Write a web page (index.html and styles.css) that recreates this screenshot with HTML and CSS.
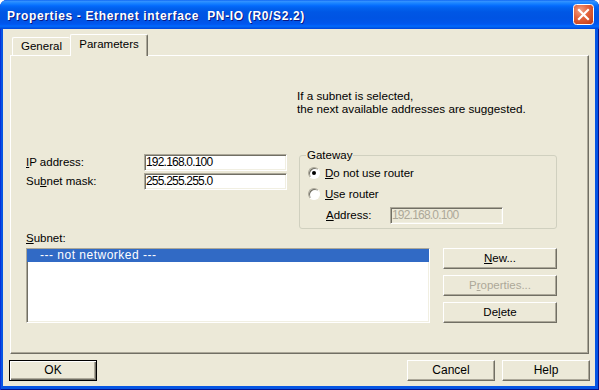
FILE: index.html
```html
<!DOCTYPE html>
<html>
<head>
<meta charset="utf-8">
<title>Properties - Ethernet interface PN-IO (R0/S2.2)</title>
<link rel="stylesheet" href="styles.css">
</head>
<body>
<div class="window">
  <div class="titlebar">
    <span class="title">Properties - Ethernet interface&nbsp; PN-IO (R0/S2.2)</span>
    <span class="close">
      <svg width="21" height="21" viewBox="0 0 21 21">
        <defs>
          <radialGradient id="cg" cx="0.35" cy="0.3" r="0.85">
            <stop offset="0" stop-color="#F2A184"/>
            <stop offset="0.45" stop-color="#E3643E"/>
            <stop offset="1" stop-color="#C33D17"/>
          </radialGradient>
        </defs>
        <rect x="0.5" y="0.5" width="20" height="20" rx="3" fill="url(#cg)" stroke="#fff"/>
        <path d="M6 6 L15 15 M15 6 L6 15" stroke="#fff" stroke-width="2.2" stroke-linecap="square"/>
      </svg>
    </span>
  </div>
  <div class="client">
    <div class="tabs">
      <div class="tab">General</div>
      <div class="tab active">Parameters</div>
    </div>
    <div class="panel">
      <p class="info">If a subnet is selected,<br>the next available addresses are suggested.</p>
      <div class="middle">
        <div class="addr">
          <span class="lbl"><u>I</u>P address:</span>
          <div class="field">192.168.0.100</div>
          <span class="lbl">Su<u>b</u>net mask:</span>
          <div class="field">255.255.255.0</div>
        </div>
        <fieldset class="gateway">
          <legend>Gateway</legend>
          <div class="radio-row"><span class="radio checked"></span><span><u>D</u>o not use router</span></div>
          <div class="radio-row"><span class="radio"></span><span><u>U</u>se router</span></div>
          <div class="addr-row"><span class="addr-lbl"><u>A</u>ddress:</span><div class="field disabled">192.168.0.100</div></div>
        </fieldset>
      </div>
      <div class="subnet-label"><u>S</u>ubnet:</div>
      <div class="lower">
        <div class="list"><div class="item sel">--- not networked ---</div></div>
        <div class="side-buttons">
          <div class="btn"><span><u>N</u>ew...</span></div>
          <div class="btn disabled"><span>P<u>r</u>operties...</span></div>
          <div class="btn"><span>De<u>l</u>ete</span></div>
        </div>
      </div>
    </div>
    <div class="footer">
      <div class="btn default">OK</div>
      <div class="btn cancel">Cancel</div>
      <div class="btn help">Help</div>
    </div>
  </div>
</div>
</body>
</html>
```
FILE: styles.css
```css
* { box-sizing: border-box; }
html, body { margin: 0; padding: 0; }
body {
  width: 599px;
  height: 390px;
  overflow: hidden;
  background: #ffffff;
  font-family: "Liberation Sans", Arial, sans-serif;
  font-size: 11.5px;
  color: #000;
}
u { text-decoration: underline; text-underline-offset: 1px; }

.window {
  width: 599px;
  height: 390px;
  display: flex;
  flex-direction: column;
  background: #0655E3;
  border-radius: 7px 7px 0 0;
  box-shadow: inset 1px 0 #0831D9, inset -1px -1px #00138C;
}

.titlebar {
  height: 29px;
  flex: none;
  display: flex;
  align-items: center;
  padding: 2px 0 0 7px;
  border-radius: 7px 7px 0 0;
  background: linear-gradient(to bottom,
    #0058EE 0px, #3A93FF 1px, #288EFF 2px, #127DFF 4px, #0369FC 6px,
    #0262EE 8px, #0057E5 12px, #0054E3 18px, #0055EB 23px, #005BF5 25px,
    #026AFE 26px, #0062EF 27px, #0043DA 29px);
}
.title {
  flex: 1;
  color: #fff;
  font-weight: bold;
  font-size: 12px;
  letter-spacing: 0.65px;
  white-space: pre;
  text-shadow: 1px 1px #0A1883;
}
.close {
  width: 21px;
  height: 21px;
  margin: -2px 5px 0 0;
  display: block;
}
.close svg { display: block; }

.client {
  flex: 1;
  margin: 0 4px 4px 3px;
  background: #ECE9D8;
  display: flex;
  flex-direction: column;
}

.tabs {
  display: flex;
  align-items: flex-end;
  height: 21px;
  margin-top: 5px;
  padding-left: 9px;
}
.tab {
  height: 18px;
  width: 58px;
  display: flex;
  align-items: center;
  justify-content: center;
  padding-bottom: 1px;
  border-top: 1px solid #fff;
  border-left: 1px solid #fff;
  border-radius: 2px 2px 0 0;
  background: #ECE9D8;
}
.tab.active {
  width: 78px;
  height: 22px;
  margin-bottom: -1px;
  padding-bottom: 3px;
  position: relative;
  z-index: 1;
  border-right: 1px solid #716F64;
  box-shadow: inset -1px 0 #ACA899;
}

.panel {
  margin-left: 7px;
  width: 579px;
  height: 299px;
  border-top: 1px solid #fff;
  border-left: 1px solid #fff;
  border-right: 1px solid #716F64;
  border-bottom: 1px solid #716F64;
  box-shadow: inset -1px -1px #ACA899;
  padding: 33px 0 0 15px;
  display: flex;
  flex-direction: column;
}

.info {
  margin: 0 0 0 271px;
  line-height: 13px;
  font-size: 11.7px;
}

.middle {
  margin-top: 34px;
  display: flex;
  align-items: flex-start;
}
.addr {
  margin-top: 5px;
  display: grid;
  grid-template-columns: 118px 143px;
  grid-auto-rows: 17px;
  row-gap: 2px;
  align-items: center;
}
.lbl { line-height: 13px; }

.field {
  height: 17px;
  background: #fff;
  border: 1px solid;
  border-color: #ACA899 #fff #fff #ACA899;
  box-shadow: inset 1px 1px #716F64, inset -1px -1px #F1EFE2;
  padding: 0 0 0 1px;
  line-height: 15px;
  font-size: 12px;
  letter-spacing: -0.8px;
  white-space: nowrap;
  overflow: hidden;
}
.field.disabled {
  background: #ECE9D8;
  color: #ACA899;
}

.gateway {
  margin: 0 0 0 12px;
  width: 258px;
  min-width: 0;
  padding: 0 0 4px 6px;
  border: 1px solid #D0D0BF;
  border-radius: 3px;
}
.gateway legend {
  padding: 0 1px;
  line-height: 13px;
  height: 13px;
}
.radio-row {
  height: 21px;
  display: flex;
  align-items: center;
  padding-left: 2px;
}
.radio {
  width: 12px;
  height: 12px;
  margin-right: 5px;
  border-radius: 50%;
  background: #fff;
  border: 1px solid;
  border-color: #ACA899 #fff #fff #ACA899;
  box-shadow: inset 1px 1px #716F64;
  position: relative;
  flex: none;
}
.radio.checked::after {
  content: "";
  position: absolute;
  left: 3px;
  top: 3px;
  width: 4px;
  height: 4px;
  border-radius: 50%;
  background: #000;
}
.addr-row {
  margin: 3px 0 0 20px;
  display: flex;
  align-items: center;
}
.addr-lbl { width: 64px; line-height: 13px; }
.addr-row .field { width: 113px; }

.subnet-label {
  margin-top: 3px;
  line-height: 13px;
}

.lower {
  margin-top: 3px;
  display: flex;
  align-items: flex-start;
}
.list {
  width: 404px;
  height: 75px;
  background: #fff;
  border: 1px solid;
  border-color: #ACA899 #fff #fff #ACA899;
  box-shadow: inset 1px 1px #716F64, inset -1px -1px #F1EFE2;
}
.item {
  height: 13px;
  line-height: 13px;
  padding-left: 13px;
  font-size: 12px;
  letter-spacing: 0.5px;
}
.item.sel {
  background: #316AC5;
  color: #fff;
}
.side-buttons {
  margin-left: 13px;
  width: 114px;
  display: flex;
  flex-direction: column;
  gap: 6px;
}

.btn {
  height: 21px;
  display: flex;
  align-items: center;
  justify-content: center;
  background: #ECE9D8;
  border: 1px solid;
  border-color: #fff #716F64 #716F64 #fff;
  box-shadow: inset -1px -1px #ACA899;
  line-height: 13px;
  padding-bottom: 1px;
}
.btn.disabled { color: #ACA899; }

.footer {
  margin-top: 6px;
  padding: 0 5px 0 6px;
  display: flex;
}
.footer .btn { width: 88px; font-size: 12px; }
.btn.default {
  border: 1px solid #000;
  box-shadow: inset 1px 1px #fff, inset -1px -1px #716F64, inset -2px -2px #ACA899;
}
.btn.cancel { margin-left: auto; }
.btn.help { margin-left: 7px; }
```
